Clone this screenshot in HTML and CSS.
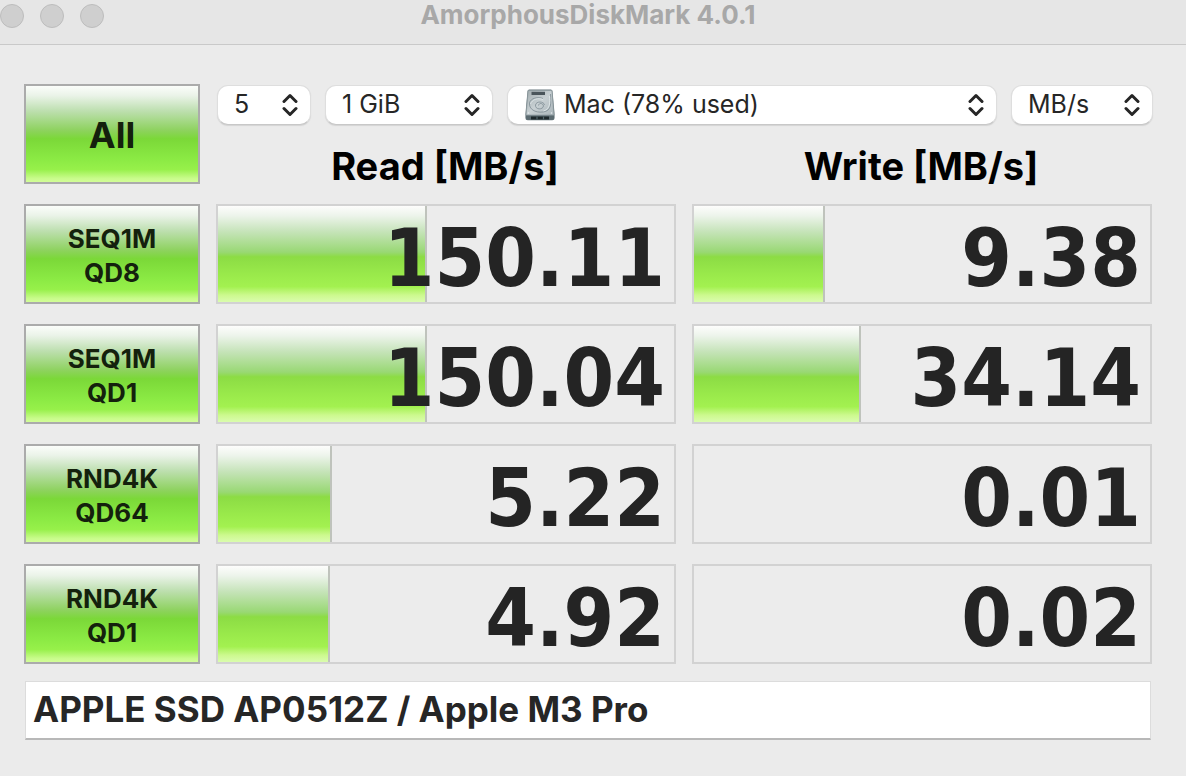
FILE: index.html
```html
<!DOCTYPE html>
<html lang="en">
<head>
<meta charset="utf-8">
<title>AmorphousDiskMark 4.0.1</title>
<link rel="stylesheet" href="styles.css">
</head>
<body>
<svg class="defs" width="0" height="0" aria-hidden="true">
  <symbol id="chevrons" viewBox="0 0 16 24">
    <path d="M2 8.500 8 2.500 14 8.500M2 15.500 8 21.500 14 15.500" fill="none" stroke="#262626" stroke-width="3" stroke-linecap="round" stroke-linejoin="round"/>
  </symbol>
</svg>
<header class="titlebar">
  <div class="lights"><span class="light"></span><span class="light"></span><span class="light"></span></div>
  <h1 class="title">AmorphousDiskMark 4.0.1</h1>
</header>
<main class="content">
  <div class="bench">
    <button class="run run-all" type="button">All</button>
    <div class="top">
      <div class="options">
        <div class="popup popup-count">
          <select class="select" aria-label="Test count"><option>5</option></select>
          <svg class="chevrons"><use href="#chevrons"/></svg>
        </div>
        <div class="popup popup-size">
          <select class="select" aria-label="Test size"><option>1 GiB</option></select>
          <svg class="chevrons"><use href="#chevrons"/></svg>
        </div>
        <div class="popup popup-disk">
          <select class="select" aria-label="Volume"><option>Mac (78% used)</option></select>
          <svg class="disk" viewBox="0 0 30 32" aria-hidden="true">
            <defs>
              <linearGradient id="plate" x1="0" y1="0" x2="1" y2="1">
                <stop offset="0" stop-color="#a3adb0"/><stop offset=".5" stop-color="#c8d0d3"/><stop offset="1" stop-color="#a9b4b9"/>
              </linearGradient>
            </defs>
            <path d="M2.500 2Q2.800 .5 4.200 .5H25.800Q27.200 .5 27.500 2L29.600 25V29Q29.600 31.300 27.300 31.300H2.700Q.4 31.300 .4 29V25Z" fill="#68777d"/>
            <path d="M3.200 1.500H26.800L28.900 26H1.100Z" fill="url(#plate)" stroke="#8f9ca1" stroke-width=".7"/>
            <path d="M1 27H29V28.700Q29 30.800 27 30.800H3Q1 30.800 1 28.700Z" fill="#5b6a70"/>
            <path d="M6 27.500H24V30.500H6Z" fill="#1d282c"/>
            <path d="M12 27.500V30.500M18.500 27.500V30.500" stroke="#53666c" stroke-width="1.200"/>
            <path d="M6.500 2.800H20V6H6.500Z" fill="#4a555b"/>
            <path d="M25.500 5C26 14 27 22 18 23C10 24 3.800 20 4.500 14C5.500 9 13 7.500 18 9.500M19.500 16C19 12 11 12 10.500 16C10 21 18 21 18.500 17C18 14 14 13.500 13.500 16.500" fill="none" stroke="#7d8c93" stroke-width=".8"/>
            <path d="M5.500 15C7 10.500 13 8.500 18 10.500M18.500 22C25.500 20 25 13 24.500 7" fill="none" stroke="#e5ecee" stroke-width=".8"/>
            <circle cx="3.500" cy="24" r=".8" fill="#e5ecee"/><circle cx="26.500" cy="24" r=".8" fill="#e5ecee"/>
          </svg>
          <svg class="chevrons"><use href="#chevrons"/></svg>
        </div>
        <div class="popup popup-unit">
          <select class="select" aria-label="Unit"><option>MB/s</option></select>
          <svg class="chevrons"><use href="#chevrons"/></svg>
        </div>
      </div>
      <div class="headings"><h2 class="heading">Read [MB/s]</h2><h2 class="heading">Write [MB/s]</h2></div>
    </div>

    <button class="run" type="button">SEQ1M<br>QD8</button>
    <div class="result"><div class="bar" style="width:45.8%"></div><output class="value">150.11</output></div>
    <div class="result"><div class="bar" style="width:28.7%"></div><output class="value">9.38</output></div>

    <button class="run" type="button">SEQ1M<br>QD1</button>
    <div class="result"><div class="bar" style="width:45.8%"></div><output class="value">150.04</output></div>
    <div class="result"><div class="bar" style="width:36.600%"></div><output class="value">34.14</output></div>

    <button class="run" type="button">RND4K<br>QD64</button>
    <div class="result"><div class="bar" style="width:25%"></div><output class="value">5.22</output></div>
    <div class="result"><output class="value">0.01</output></div>

    <button class="run" type="button">RND4K<br>QD1</button>
    <div class="result"><div class="bar" style="width:24.600%"></div><output class="value">4.92</output></div>
    <div class="result"><output class="value">0.02</output></div>
  </div>
  <input class="device" type="text" aria-label="Device" value="APPLE SSD AP0512Z / Apple M3 Pro">
</main>
</body>
</html>
```
FILE: styles.css
```css
* { box-sizing: border-box; }

body {
  margin: 0;
  min-height: 100vh;
  background: #ebebeb;
  color: #262626;
  font-family: Inter, "Liberation Sans", sans-serif;
}

.defs { position: absolute; }

.titlebar {
  display: grid;
  grid-template-columns: 1fr auto 1fr;
  height: 45px;
  border-bottom: 1px solid #c9c9c9;
  background: #e6e6e6;
}

.lights { display: flex; gap: 16px; padding-top: 4px; }

.light {
  width: 24px;
  height: 24px;
  border: 1px solid #bdbdbd;
  border-radius: 50%;
  background: #cfcfcf;
}

.title {
  margin: 0;
  padding-right: 10px;
  color: #a8a8a8;
  font-size: 26px;
  font-weight: 700;
  line-height: 30px;
}

.content { padding: 39px 34px 0 24px; }

.bench {
  display: grid;
  grid-template-columns: 176px 1fr 1fr;
  grid-auto-rows: 100px;
  gap: 20px 16px;
}

.run {
  padding: 4px 0 0;
  border: 2px solid #ababab;
  background: linear-gradient(#fbfdfa 0%, #eaf3e8 10%, #bddfaf 26%, #8ed25f 46%, #7bd838 55%, #8bea44 76%, #97f04a 87%, #c8fb8a 96%, #d2fd98 100%) padding-box;
  color: #14210d;
  font-family: inherit;
  font-size: 26px;
  font-weight: 700;
  line-height: 34px;
}

.run-all { padding-top: 2px; font-size: 36px; }

.top {
  grid-column: span 2;
  display: flex;
  flex-direction: column;
  gap: 16px;
  padding-top: 1px;
}

.options { display: flex; gap: 14px; margin: 0 -1px 0 1px; }

.popup { position: relative; flex: none; height: 40px; }
.popup-count { width: 94px; }
.popup-size { width: 168px; }
.popup-disk { flex: 1; }
.popup-unit { width: 142px; }

.select {
  width: 100%;
  height: 40px;
  padding: 0 40px 2px 16px;
  border: 1px solid #dedede;
  border-bottom-color: #c8c8c8;
  border-radius: 11px;
  background: #fff;
  box-shadow: 0 1px 1px #d4d4d4;
  appearance: none;
  color: #262626;
  font-family: inherit;
  font-size: 25px;
}

.popup-disk .select { padding-left: 56px; }

.chevrons {
  position: absolute;
  top: 8px;
  right: 13px;
  width: 16px;
  height: 24px;
  pointer-events: none;
}

.disk {
  position: absolute;
  top: 4px;
  left: 18px;
  width: 30px;
  height: 32px;
  pointer-events: none;
}

.headings { display: grid; grid-template-columns: 1fr 1fr; gap: 16px; }

.heading {
  margin: 0;
  padding-right: 2px;
  color: #000;
  font-size: 38px;
  font-weight: 700;
  line-height: 50px;
  text-align: center;
}

.result {
  display: grid;
  border: 2px solid #d2d2d2;
  background: #ececec;
}

.bar {
  grid-area: 1 / 1;
  border-right: 2px solid #bfc3bc;
  background: linear-gradient(#fdfdfc 0%, #edf4eb 10%, #c7e4bb 26%, #99d874 48%, #8cdc44 53%, #9aea4b 72%, #a3f150 84%, #cdf98f 93%, #dafcae 100%) padding-box;
}

.value {
  grid-area: 1 / 1;
  padding: 8px 9px 0 0;
  color: #242424;
  font-family: "DejaVu Sans Condensed", "DejaVu Sans", sans-serif;
  font-size: 81px;
  font-weight: 700;
  line-height: 88px;
  text-align: right;
}

.device {
  display: block;
  width: calc(100% - 2px);
  height: 59px;
  margin: 17px 1px 0;
  padding: 0 7px 2px;
  border: 1px solid #dcdcdc;
  border-bottom: 2px solid #b8b8b8;
  background: #fff;
  color: #262626;
  font-family: inherit;
  font-size: 35px;
  font-weight: 700;
}
```
